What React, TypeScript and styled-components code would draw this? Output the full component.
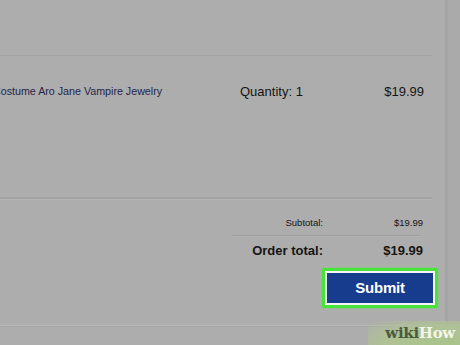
import React from "react";
import styled, { createGlobalStyle } from "styled-components";

const Global = createGlobalStyle`
  html, body { margin: 0; padding: 0; background: #adadad; }
  body { width: 460px; height: 345px; overflow: hidden; font-family: "Liberation Sans", Arial, sans-serif; }
`;

const Page = styled.div`
  position: relative;
  display: flex;
  width: 460px;
  height: 345px;
  overflow: hidden;
  background: #adadad;
`;

const Panel = styled.div`
  width: 448px;
  height: 345px;
  border-right: 3px solid #a4a4a4;
  display: flex;
  flex-direction: column;
  box-sizing: border-box;
  overflow: hidden;
`;

const SideStrip = styled.div`
  flex: 1;
  background: #aaaaaa;
`;

const Spacer = styled.div<{ $h: number }>`
  height: ${(p) => p.$h}px;
  flex-shrink: 0;
`;

const Divider = styled.div<{ $double?: boolean }>`
  width: 432px;
  height: ${(p) => (p.$double ? 2 : 1)}px;
  background: #a2a2a2;
  border-bottom: ${(p) => (p.$double ? "1px solid #b6b6b6" : "none")};
  box-shadow: ${(p) => (p.$double ? "0 -3px 0 -2px #a6a6a6" : "none")};
  flex-shrink: 0;
`;

const ItemRow = styled.div`
  display: grid;
  grid-template-columns: 240px 1fr 90px;
  align-items: center;
  width: 424px;
  height: 70px;
  flex-shrink: 0;
`;

const ItemName = styled.span`
  font-size: 10.7px;
  color: #252549;
  white-space: nowrap;
  margin-left: -7px;
`;

const Qty = styled.span`
  font-size: 13px;
  color: #151515;
`;

const Price = styled.span<{ $bold?: boolean; $small?: boolean }>`
  text-align: right;
  font-size: ${(p) => (p.$small ? 9.5 : 13)}px;
  font-weight: ${(p) => (p.$bold ? 700 : 400)};
  color: #151515;
`;

const Summary = styled.div`
  display: flex;
  flex-direction: column;
  align-items: flex-end;
  width: 423px;
`;

const SummaryRow = styled.div<{ $h: number; $top?: number }>`
  display: grid;
  grid-template-columns: 120px 100px;
  align-items: center;
  height: ${(p) => p.$h}px;
  padding-top: ${(p) => p.$top ?? 0}px;
`;

const Label = styled.span<{ $bold?: boolean; $small?: boolean }>`
  text-align: right;
  font-size: ${(p) => (p.$small ? 9.5 : 13)}px;
  font-weight: ${(p) => (p.$bold ? 700 : 400)};
  color: #151515;
`;

const SummaryLine = styled.div`
  width: 188px;
  height: 1px;
  margin-right: 3px;
  background: #a0a0a0;
  border-bottom: 1px solid #b4b4b4;
`;

const ButtonRow = styled.div`
  display: flex;
  justify-content: flex-end;
  width: 438px;
  margin-top: 5px;
`;

const Highlight = styled.div`
  padding: 3px;
  background: #49e23d;
  border-radius: 2px;
  box-shadow: 0 0 2px #5cf04e;
`;

const SubmitButton = styled.button`
  width: 110px;
  height: 34px;
  border: 2px solid #f4f4f4;
  background: #173b8d;
  color: #ffffff;
  font-family: "Liberation Sans", Arial, sans-serif;
  font-weight: 700;
  font-size: 15px;
  letter-spacing: -0.2px;
  cursor: pointer;
  display: flex;
  align-items: center;
  justify-content: center;
  padding: 0 0 1px 0;
`;

const BottomLine = styled.div`
  width: 448px;
  height: 1px;
  background: #b8b8b8;
  border-bottom: 1px solid #a5a5a5;
  margin-top: 17px;
`;

const Watermark = styled.div`
  position: absolute;
  right: 0;
  bottom: 0;
  width: 92px;
  height: 24px;
  display: flex;
  align-items: center;
  justify-content: flex-end;
  padding-right: 5px;
  box-sizing: border-box;
  background: radial-gradient(ellipse at 80% 100%, #a9c48a 0%, #afc196 55%, rgba(173, 173, 173, 0) 100%);
  font-family: "DejaVu Serif", "Liberation Serif", serif;
  font-weight: 700;
  font-size: 15px;
  letter-spacing: -0.3px;
`;

const WikiPart = styled.span`
  color: #4b5a3c;
`;

const HowPart = styled.span`
  color: #f1f5ea;
`;

export default function App() {
  return (
    <>
      <Global />
      <Page>
        <Panel>
          <Spacer $h={55} />
          <Divider />
          <ItemRow>
            <ItemName>Costume Aro Jane Vampire Jewelry</ItemName>
            <Qty>Quantity: 1</Qty>
            <Price>$19.99</Price>
          </ItemRow>
          <Spacer $h={71} />
          <Divider $double />
          <Summary>
            <SummaryRow $h={26} $top={9}>
              <Label $small>Subtotal:</Label>
              <Price $small>$19.99</Price>
            </SummaryRow>
            <SummaryLine />
            <SummaryRow $h={26}>
              <Label $bold>Order total:</Label>
              <Price $bold>$19.99</Price>
            </SummaryRow>
          </Summary>
          <ButtonRow>
            <Highlight>
              <SubmitButton>Submit</SubmitButton>
            </Highlight>
          </ButtonRow>
          <BottomLine />
        </Panel>
        <SideStrip />
        <Watermark>
          <WikiPart>wiki</WikiPart>
          <HowPart>How</HowPart>
        </Watermark>
      </Page>
    </>
  );
}
